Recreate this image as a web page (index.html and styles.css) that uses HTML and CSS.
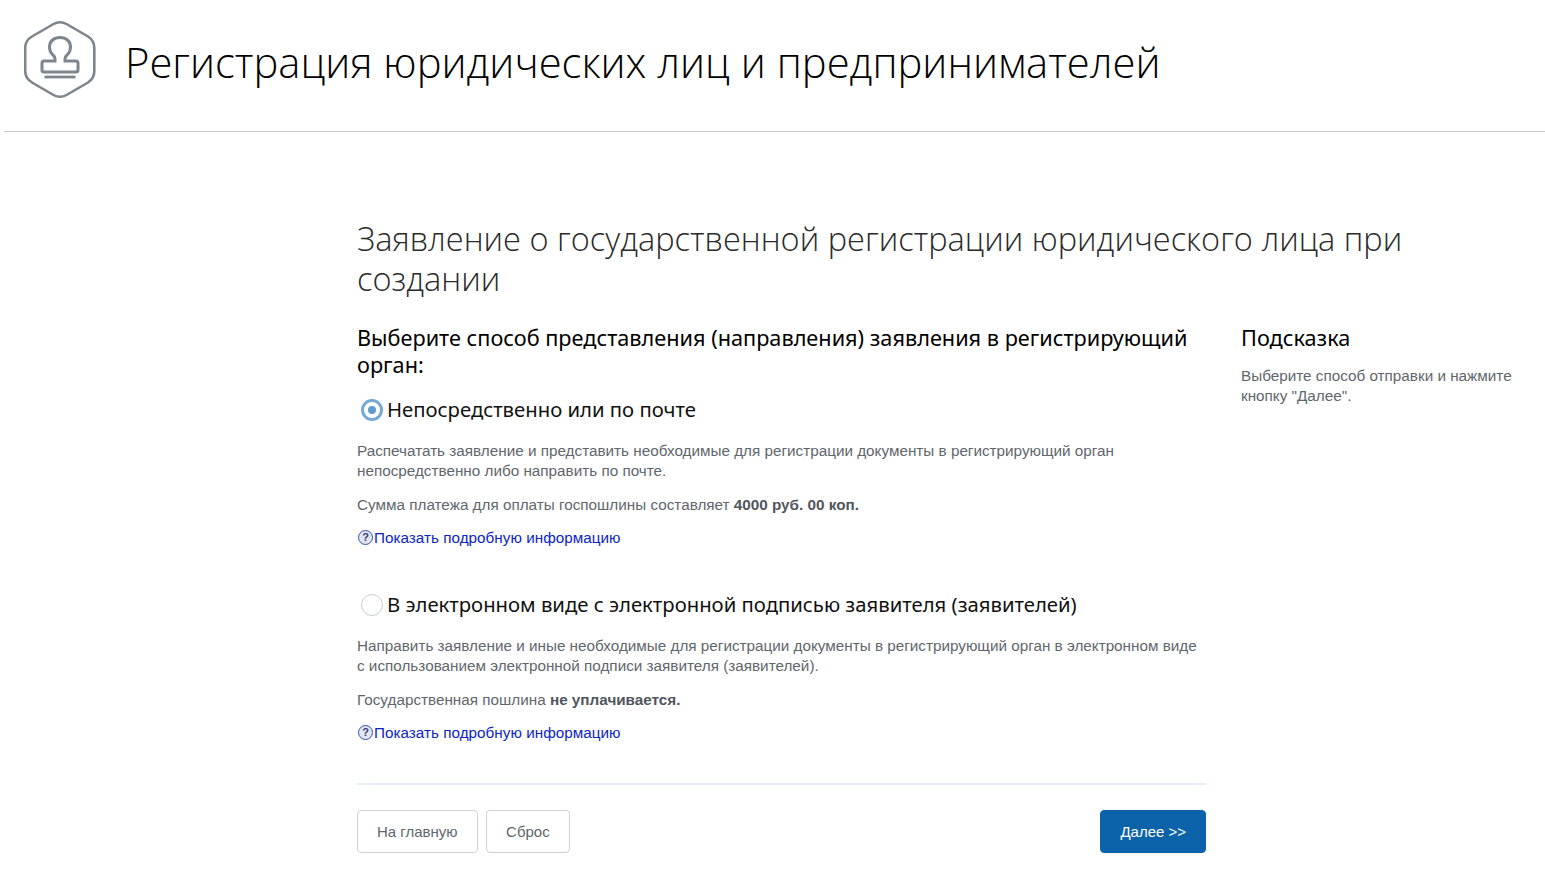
FILE: index.html
```html
<!DOCTYPE html>
<html lang="ru">
<head>
<meta charset="utf-8">
<title>Регистрация юридических лиц и предпринимателей</title>
<link rel="stylesheet" href="styles.css">
</head>
<body>
<header class="top">
  <svg class="logo" width="72" height="79" viewBox="0 0 72 79" fill="none" stroke="#7d858d">
    <path d="M36 2.200 Q39.500 2.200 42.500 4 L64 16.500 Q70.300 20.500 70.300 28 L70.300 51 Q70.300 58.500 64 62.500 L42.500 75 Q39.500 76.800 36 76.800 Q32.500 76.800 29.500 75 L8 62.500 Q1.200 58.500 1.200 51 L1.200 28 Q1.200 20.500 8 16.500 L29.500 4 Q32.500 2.200 36 2.200 Z" stroke-width="2.600"/>
    <path d="M31 41 V39 Q31 36.500 28.500 34.500 Q25.500 31.500 25.500 27 C25.500 21 30 17.500 36 17.500 C42 17.500 46.500 21 46.500 27 Q46.500 31.500 43.500 34.500 Q41 36.500 41 39 V41 H52 Q54 41 54 43 V50 Q54 52 52 52 H20 Q18 52 18 50 V43 Q18 41 20 41 Z" stroke-width="3"/>
    <path d="M20.500 57 H51.500" stroke-width="2.800"/>
  </svg>
  <h1 class="site-title">Регистрация юридических лиц и предпринимателей</h1>
</header>
<main class="page">
  <h2 class="doc-title">Заявление о государственной регистрации юридического лица при создании</h2>
  <div class="columns">
    <section class="form">
      <h3 class="form-title">Выберите способ представления (направления) заявления в регистрирующий орган:</h3>

      <div class="option">
        <label class="choice"><span class="radio radio-on"></span>Непосредственно или по почте</label>
        <p class="text">Распечатать заявление и представить необходимые для регистрации документы в регистрирующий орган непосредственно либо направить по почте.</p>
        <p class="text">Сумма платежа для оплаты госпошлины составляет <b>4000 руб. 00 коп.</b></p>
        <a class="more" href="#"><span class="q">?</span>Показать подробную информацию</a>
      </div>

      <div class="option">
        <label class="choice"><span class="radio"></span>В электронном виде с электронной подписью заявителя (заявителей)</label>
        <p class="text">Направить заявление и иные необходимые для регистрации документы в регистрирующий орган в электронном виде с использованием электронной подписи заявителя (заявителей).</p>
        <p class="text">Государственная пошлина <b>не уплачивается.</b></p>
        <a class="more" href="#"><span class="q">?</span>Показать подробную информацию</a>
      </div>

      <div class="actions">
        <a class="btn" href="#">На главную</a>
        <a class="btn" href="#">Сброс</a>
        <a class="btn btn-primary" href="#">Далее &gt;&gt;</a>
      </div>
    </section>
    <aside class="hint">
      <h3 class="hint-title">Подсказка</h3>
      <p class="text">Выберите способ отправки и нажмите кнопку "Далее".</p>
    </aside>
  </div>
</main>
</body>
</html>
```
FILE: styles.css
```css
* { box-sizing: border-box; }
html, body { margin: 0; padding: 0; }
body {
  background: #fff;
  color: #000;
  font-family: "Liberation Sans", Arial, sans-serif;
  overflow: hidden;
  height: 879px;
}
.top {
  margin-left: 4px;
  height: 132px;
  border-bottom: 1px solid #c8c8c8;
  display: flex;
  align-items: flex-start;
  padding: 20px 0 0 20px;
}
.logo { flex: none; }
.site-title {
  margin: 19px 0 0 29px;
  font: 300 41.75px/46px "Open Sans", sans-serif;
  color: #000;
}
.page { padding: 87px 0 0 357px; }
.doc-title {
  margin: 0;
  width: 1100px;
  font: 300 32.55px/40px "Open Sans", sans-serif;
  color: #2a2a2a;
}
.columns { display: flex; margin-top: 25px; }
.form { width: 849px; flex: none; }
.form-title, .hint-title {
  margin: 0;
  font: 450 21.7px/27px "Noto Sans", sans-serif;
  color: #000;
}
.option { margin-top: 18px; height: 177px; }
.choice {
  display: flex;
  align-items: center;
  height: 27px;
  font: 450 20.3px/27px "Noto Sans", sans-serif;
  color: #111;
}
.radio {
  width: 22px;
  height: 22px;
  margin: 0 4px;
  border: 1px solid #c9cdd0;
  border-radius: 50%;
  background: #fff;
  flex: none;
  position: relative;
}
.radio-on { border: 3px solid #74abd6; }
.radio-on::after {
  content: "";
  position: absolute;
  left: 4px;
  top: 4px;
  width: 8px;
  height: 8px;
  border-radius: 50%;
  background: #5d9ccd;
}
.text {
  margin: 0;
  font-size: 15.28px;
  line-height: 20px;
  color: #5f666c;
}
.choice + .text { margin-top: 18px; }
.text + .text { margin-top: 14px; }
.text b { color: #50565c; }
.more {
  display: flex;
  align-items: center;
  margin-top: 12px;
  height: 20px;
  font-size: 15.25px;
  letter-spacing: 0.02px;
  color: #0b25c9;
  text-decoration: none;
}
.q {
  width: 15px;
  height: 15px;
  margin: 0 1px 0 1px;
  border: 1px solid #2f4fb5;
  border-radius: 50%;
  background: #e3e6ee;
  color: #33407a;
  font-size: 11px;
  font-weight: bold;
  line-height: 13px;
  text-align: center;
  flex: none;
}
.actions {
  display: flex;
  gap: 8.5px;
  margin-top: 15px;
  padding-top: 25px;
  border-top: 2px solid #e6eff8;
}
.btn {
  display: block;
  height: 43px;
  padding: 0 19px;
  border: 1px solid #d2d2d2;
  border-radius: 4px;
  background: #fff;
  color: #5f666c;
  font-size: 15px;
  line-height: 41px;
  text-decoration: none;
}
.btn-primary {
  margin-left: auto;
  background: #0d63aa;
  border-color: #0d63aa;
  color: #fff;
}
.hint { margin-left: 35px; width: 290px; }
.hint .text { margin-top: 15px; }
```
